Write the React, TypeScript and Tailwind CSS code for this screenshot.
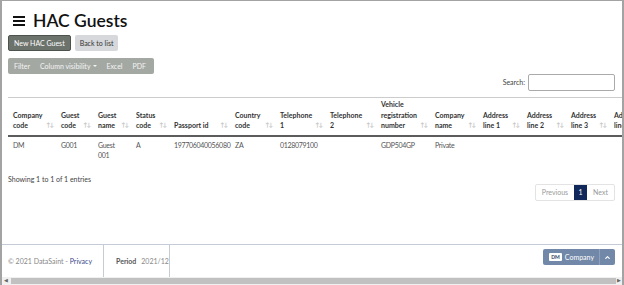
import { ChevronUp } from "lucide-react";

const font = { fontFamily: 'Lato, "Segoe UI", "Noto Sans", sans-serif' };

const columns = [
  { label: ["Company", "code"], w: "w-[48px]" },
  { label: ["Guest", "code"], w: "w-[37px]" },
  { label: ["Guest", "name"], w: "w-[38px]" },
  { label: ["Status", "code"], w: "w-[38px]" },
  { label: ["Passport id"], w: "w-[61px]" },
  { label: ["Country", "code"], w: "w-[45px]" },
  { label: ["Telephone", "1"], w: "w-[50px]" },
  { label: ["Telephone", "2"], w: "w-[51px]" },
  { label: ["Vehicle", "registration", "number"], w: "w-[54px]" },
  { label: ["Company", "name"], w: "w-[48px]" },
  { label: ["Address", "line 1"], w: "w-[44px]" },
  { label: ["Address", "line 2"], w: "w-[44px]" },
  { label: ["Address", "line 3"], w: "w-[43px]" },
  { label: ["Address", "line 4"], w: "w-[44px]" },
];

const row = ["DM", "G001", "Guest 001", "A", "197706040056080", "ZA", "0128079100", "", "GDP504GP", "Private", "", "", "", ""];

export default function App() {
  return (
    <div
      className="w-[624px] h-[285px] overflow-hidden bg-white border-l-2 border-r-2 border-t border-[#a3a3a3] flex flex-col text-[#333]"
      style={font}
    >
      <div className="flex-1 min-h-0 flex flex-col">
        <div className="pl-[6px] pt-[6px]">
          <h1 className="flex items-center gap-[8px] text-[17.5px] font-semibold leading-[28px] text-[#111]">
            <span className="flex flex-col gap-[2px] ml-[5px] w-[12px]">
              <span className="h-[2px] bg-[#111]" />
              <span className="h-[2px] bg-[#111]" />
              <span className="h-[2px] bg-[#111]" />
            </span>
            HAC Guests
          </h1>
          <div className="flex gap-[4px]">
            <button className="h-[16px] px-[5px] text-[7px] text-white bg-[#6c726c] border border-[#4d524d] rounded-[2px] leading-none">
              New HAC Guest
            </button>
            <button className="h-[16px] px-[5px] text-[7px] text-[#333] bg-[#d6d8db] rounded-[2px] leading-none">
              Back to list
            </button>
          </div>
          <div className="flex mt-[7px]">
            <div className="flex h-[16px] items-center bg-[#a3a8a3] rounded-[2px] text-[7px] text-[#f4f4f4] px-[6px] gap-[10px]">
              <span>Filter</span>
              <span className="flex items-center gap-[2px]">
                Column visibility
                <span className="w-0 h-0 border-l-[2px] border-r-[2px] border-t-[2.5px] border-l-transparent border-r-transparent border-t-[#f4f4f4]" />
              </span>
              <span>Excel</span>
              <span className="pr-[2px]">PDF</span>
            </div>
          </div>
          <div className="flex justify-end items-center gap-[3px] pr-[7px]">
            <span className="text-[7px] text-[#444]">Search:</span>
            <div className="w-[87px] h-[17px] border border-[#aaa] rounded-[2px]" />
          </div>
        </div>

        <div className="pl-[6px] mt-[6px]">
          <table className="border-collapse table-fixed w-[645px] border-t border-[#ccc]">
            <thead>
              <tr className="border-b-2 border-[#5c5c5c]">
                {columns.map((c, i) => (
                  <th
                    key={i}
                    className={`${c.w} relative align-bottom text-left font-bold text-[7px] leading-[10.5px] pl-[5px] pr-[8px] pt-[1px] pb-[4px] text-[#333]`}
                  >
                    {c.label.map((l, j) => (
                      <div key={j} className="whitespace-nowrap">{l}</div>
                    ))}
                    <span className="absolute right-[3px] bottom-[4px] text-[6px] text-[#c4c4c4] tracking-[-1px]">↑↓</span>
                  </th>
                ))}
              </tr>
            </thead>
            <tbody>
              <tr>
                {row.map((v, i) => (
                  <td key={i} className="align-top text-[7px] tracking-[-0.3px] leading-[10px] pl-[5px] pr-[2px] pt-[3px] pb-[8px] text-[#555] whitespace-nowrap">
                    {v === "Guest 001" ? (
                      <>
                        <div>Guest</div>
                        <div>001</div>
                      </>
                    ) : (
                      v
                    )}
                  </td>
                ))}
              </tr>
            </tbody>
          </table>
        </div>

        <div className="flex justify-between items-start pl-[6px] pr-[7px] mt-[5px]">
          <span className="text-[7px] text-[#444] mt-[1px]">Showing 1 to 1 of 1 entries</span>
          <div className="flex h-[17px] mt-[11px] text-[7px] border border-[#e3e3e3] rounded-[2px]">
            <span className="px-[6px] flex items-center text-[#999]">Previous</span>
            <span className="w-[13px] flex items-center justify-center text-white bg-[#10285a]">1</span>
            <span className="px-[6px] flex items-center text-[#999]">Next</span>
          </div>
        </div>
      </div>

      <div className="h-[33px] border-t border-[#c5ccd6] flex items-stretch shrink-0">
        <div className="w-[102px] flex items-center pl-[6px] text-[7px] text-[#888] border-r border-[#c5ccd6]">
          © 2021 DataSaint -&nbsp;<span className="text-[#3a4a8a]">Privacy</span>
        </div>
        <div className="w-[66px] flex items-center pl-[12px] text-[7px] border-r border-[#c5ccd6]">
          <span className="font-bold text-[#555]">Period</span>
          <span className="ml-[5px] text-[#888]">2021/12</span>
        </div>
        <div className="flex-1 flex justify-end items-start pt-[4px] pr-[7px]">
          <div className="flex h-[16px] bg-[#7188a8] rounded-[2px] text-white text-[7px]">
            <div className="flex items-center gap-[3px] pl-[6px] pr-[5px]">
              <span className="bg-white text-[#2b3a55] font-bold text-[5px] px-[2px] leading-[8px] rounded-[1px]">DM</span>
              <span>Company</span>
            </div>
            <div className="w-[16px] border-l border-[#8ea0bb] flex items-center justify-center">
              <ChevronUp size={7} strokeWidth={4} />
            </div>
          </div>
        </div>
      </div>

      <div className="h-[8px] bg-[#f0f0f0] flex items-center shrink-0">
        <span className="text-[5px] text-[#666] pl-[2px]">◀</span>
        <div className="ml-[3px] h-[6px] w-[605px] bg-[#c1c1c1]" />
        <span className="text-[5px] text-[#666] ml-auto pr-[1px]">▶</span>
      </div>
    </div>
  );
}
